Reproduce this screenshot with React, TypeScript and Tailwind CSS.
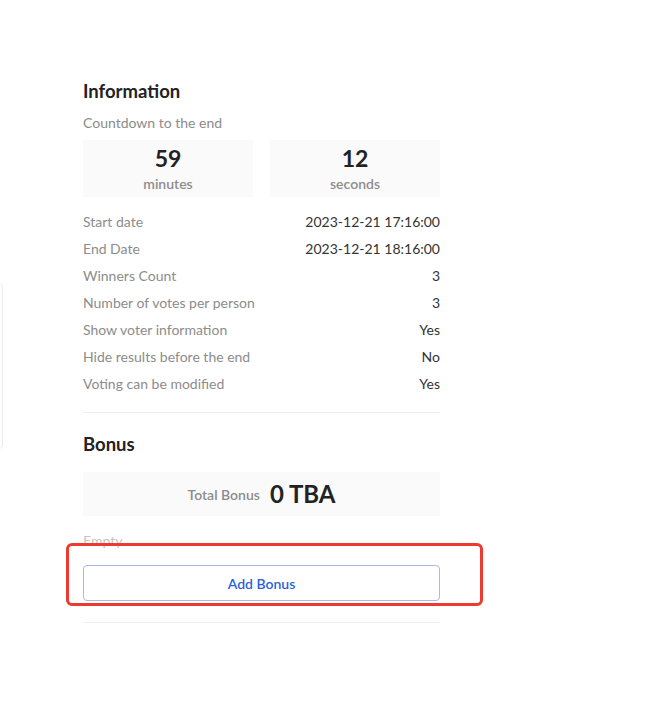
const details = [
  { label: "Start date", value: "2023-12-21 17:16:00" },
  { label: "End Date", value: "2023-12-21 18:16:00" },
  { label: "Winners Count", value: "3" },
  { label: "Number of votes per person", value: "3" },
  { label: "Show voter information", value: "Yes" },
  { label: "Hide results before the end", value: "No" },
  { label: "Voting can be modified", value: "Yes" },
]

const countdown = [
  { amount: "59", unit: "minutes" },
  { amount: "12", unit: "seconds" },
]

const App = () => {
  return (
    <div className="relative min-h-[705px] w-[657px] bg-white font-['Lato','Liberation_Sans',sans-serif] text-[14px]">
      {/* edge of the neighbouring card */}
      <div className="absolute left-[-20px] top-[283px] h-[166px] w-[23px] rounded-r-[4px] border border-[#ededed]" />

      <div className="ml-[83px] w-[357px] pt-[79px]">
        <h2 className="text-[18.5px] font-bold leading-[24px] text-[#222]">Information</h2>
        <p className="mt-[10px] leading-[20px] text-[#8c8c8c]">Countdown to the end</p>

        <div className="mt-[7px] grid grid-cols-2 gap-[17px]">
          {countdown.map((c) => (
            <div key={c.unit} className="flex h-[57px] flex-col items-center bg-[#fafafa] pt-[5px]">
              <span className="text-[23px] font-bold leading-[26px] text-[#222]">{c.amount}</span>
              <span className="mt-[4px] text-[14px] font-semibold leading-[18px] text-[#8c8c8c]">{c.unit}</span>
            </div>
          ))}
        </div>

        <div className="mt-[11px] flex flex-col">
          {details.map((d) => (
            <div key={d.label} className="flex h-[27px] items-center justify-between">
              <span className="text-[#8c8c8c]">{d.label}</span>
              <span className="text-[#333]">{d.value}</span>
            </div>
          ))}
        </div>

        <div className="mt-[15px] h-px bg-[#f0f0f0]" />

        <h2 className="mt-[19px] text-[18.5px] font-bold leading-[24px] text-[#222]">Bonus</h2>

        <div className="mt-[16px] flex h-[44px] items-center justify-center gap-[10px] bg-[#fafafa]">
          <span className="font-semibold text-[#8c8c8c]">Total Bonus</span>
          <span className="text-[24px] font-bold text-[#222]">0 TBA</span>
        </div>

        <p className="mt-[15px] leading-[20px] text-[#c4c4c4]">Empty</p>

        <button className="mt-[14px] flex h-[36px] w-full items-center justify-center rounded-[4px] border border-[#a9b7ec] bg-white font-semibold text-[#2e5fd9]">
          Add Bonus
        </button>

        <div className="mt-[21px] h-px bg-[#f0f0f0]" />
      </div>

      {/* highlight around the add button */}
      <div className="pointer-events-none absolute left-[66px] top-[543px] h-[63px] w-[417px] rounded-[6px] border-[3px] border-[#ec3a2f]" />
    </div>
  )
}

export default App
